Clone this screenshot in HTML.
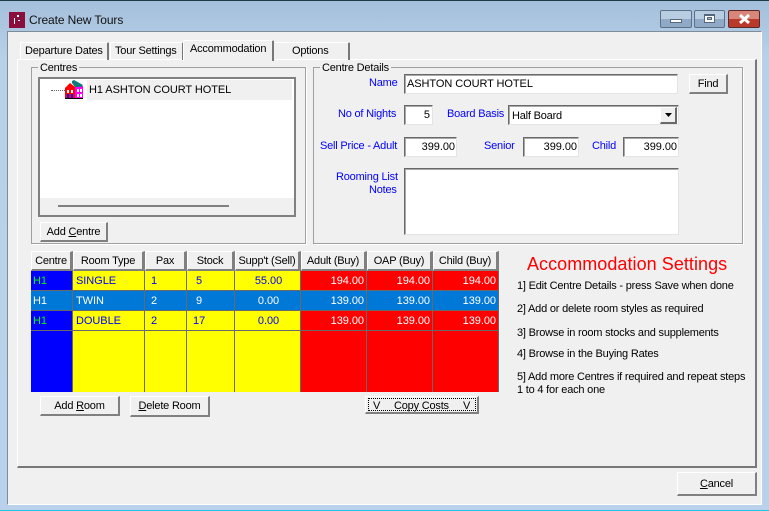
<!DOCTYPE html>
<html><head><meta charset="utf-8"><style>
html,body{margin:0;padding:0;width:769px;height:511px;overflow:hidden}
#w{position:relative;width:769px;height:511px;overflow:hidden;background:linear-gradient(#a4bfdb,#b9d1e8 60px,#b9d1ea);font:11px/16px "Liberation Sans",sans-serif;letter-spacing:-.2px;color:#000}
#w div,#w span{position:absolute;box-sizing:border-box;white-space:nowrap}
.b{color:#0000ff}
.up{letter-spacing:-.07px}
.n{letter-spacing:-.05px}
.in{background:#fff;border:1px solid;border-color:#696969 #e4e4e4 #e4e4e4 #696969;box-shadow:inset 1px 1px 0 #a8a8a8}
.btn{background:#f0f0f0;border:1px solid;border-color:#fff #808080 #808080 #fff;border-width:1px 2px 2px 1px;text-align:center;line-height:18px}
.grp{border:1px solid #a0a0a0;box-shadow:1px 1px 0 #fff}
.h{background:#f0f0f0;border:1px solid;border-color:#fff #808080 #808080 #fff;border-width:1px 3px 2px 1px;text-align:center;line-height:18px;height:20px}
.c{height:19px;line-height:21px;padding:0 2px;letter-spacing:-.05px}
u{text-decoration:underline}
</style></head><body><div id="w">
<div style="left:0;top:0;width:769px;height:1px;background:#1d3b45"></div>
<div style="left:0;top:510px;width:769px;height:1px;background:#20c8e8"></div>
<div style="left:9px;top:12px;width:16px;height:16px;background:#8b0f3d"></div>
<div style="left:17px;top:15px;width:2px;height:2px;background:#fff"></div>
<div style="left:14px;top:18px;width:1px;height:6px;background:#fff"></div>
<div style="left:18px;top:20px;width:2px;height:1px;background:#fff"></div>
<span style="left:29px;top:12px;font-size:12px;letter-spacing:-.1px;color:#111">Create New Tours</span>

<div style="left:660px;top:10px;width:32px;height:18px;border:1px solid #5d7088;border-radius:2px;background:linear-gradient(#b9cde2 50%,#8fa9c6 50%)"></div>
<div style="left:670px;top:19px;width:12px;height:4px;background:#fff;border:1px solid #55677c"></div>
<div style="left:694px;top:10px;width:31px;height:18px;border:1px solid #5d7088;border-radius:2px;background:linear-gradient(#b9cde2 50%,#8fa9c6 50%)"></div>
<div style="left:704px;top:14px;width:11px;height:9px;background:#fff;border:1px solid #55677c;border-top-width:2px"></div>
<div style="left:707px;top:17px;width:5px;height:3px;background:#a4bbd4;border:1px solid #55677c"></div>
<div style="left:728px;top:10px;width:32px;height:18px;border:1px solid #5a2a2a;border-radius:2px;background:linear-gradient(#d8867a 50%,#b93a2a 50%)"></div>
<svg style="position:absolute;left:738px;top:14px" width="13" height="10" viewBox="0 0 13 10"><path d="M2 1L11 9M11 1L2 9" stroke="#fff" stroke-width="3"/></svg>

<div style="left:7px;top:31px;width:755px;height:474px;background:#f0f0f0;border:1px solid;border-color:#7e8c9a #fff #fff #7e8c9a"></div>

<div style="left:17px;top:59px;width:740px;height:409px;border:1px solid;border-color:#fff #787878 #787878 #fff;border-width:1px 2px 2px 1px"></div>

<div style="left:20px;top:42px;width:89px;height:18px;border:1px solid;border-color:#fff #787878 #f0f0f0 #fff;border-width:1px 2px 0 1px;border-radius:2px 2px 0 0"></div>
<span style="left:25px;top:43px">Departure Dates</span>
<div style="left:110px;top:42px;width:74px;height:18px;border:1px solid;border-color:#fff #787878 #f0f0f0 #fff;border-width:1px 2px 0 1px;border-radius:2px 2px 0 0"></div>
<span style="left:115px;top:43px">Tour Settings</span>
<div style="left:183px;top:40px;width:91px;height:21px;background:#f0f0f0;border:1px solid;border-color:#fff #787878 #f0f0f0 #fff;border-width:1px 2px 0 1px;border-radius:2px 2px 0 0"></div>
<span style="left:190px;top:41px">Accommodation</span>
<div style="left:274px;top:42px;width:76px;height:18px;border:1px solid;border-color:#fff #787878 #f0f0f0 #f0f0f0;border-width:1px 2px 0 1px;border-radius:2px 2px 0 0"></div>
<span style="left:292px;top:43px">Options</span>

<div class="grp" style="left:31px;top:67px;width:275px;height:177px"></div>
<span style="left:38px;top:60px;background:#f0f0f0;padding:0 2px;">Centres</span>
<div style="left:38px;top:77px;width:258px;height:140px;background:#fff;border:2px solid #808080"></div>
<div style="left:87px;top:80px;width:205px;height:20px;background:#f0f0f0"></div>
<div style="left:40px;top:198px;width:254px;height:17px;background:#f0f0f0"></div>
<div style="left:58px;top:205px;width:171px;height:2px;background:#808080"></div>
<div style="left:51px;top:90px;width:14px;height:0;border-top:1px dotted #666"></div>
<svg style="position:absolute;left:64px;top:79px" width="20" height="21" viewBox="0 0 20 21"><rect x="1" y="9" width="10" height="11" fill="#f00"/><rect x="11" y="7" width="8" height="13" fill="#f0f"/><path d="M1 9L6 4L11 8V9H1Z" fill="#f00"/><path d="M8 2L10 1L19 6L17 8H11L8 4Z" fill="#0f7c7c"/><rect x="1" y="19" width="18" height="1" fill="#000"/><rect x="3" y="11" width="2" height="3" fill="#fff"/><rect x="7" y="11" width="2" height="3" fill="#fff"/><rect x="3" y="15" width="2" height="4" fill="#00f"/><rect x="7" y="15" width="2" height="4" fill="#00f"/><rect x="13" y="10" width="2" height="3" fill="#fff"/><rect x="16" y="10" width="2" height="3" fill="#fff"/><rect x="13" y="15" width="2" height="3" fill="#fff"/><rect x="16" y="15" width="2" height="3" fill="#fff"/></svg>
<span class="up" style="left:89px;top:82px">H1 ASHTON COURT HOTEL</span>
<div class="btn" style="left:40px;top:222px;width:68px;height:20px">Add <u>C</u>entre</div>

<div class="grp" style="left:313px;top:67px;width:430px;height:177px"></div>
<span style="left:320px;top:60px;background:#f0f0f0;padding:0 2px;">Centre Details</span>
<span class="b" style="left:369px;top:75px">Name</span>
<div class="in" style="left:404px;top:74px;width:274px;height:20px"></div>
<span class="up" style="left:407px;top:76px">ASHTON COURT HOTEL</span>
<div class="btn" style="left:689px;top:74px;width:39px;height:20px">Find</div>
<span class="b" style="left:338px;top:106px">No of Nights</span>
<div class="in n" style="left:404px;top:105px;width:29px;height:20px;text-align:right;padding-right:2px;line-height:18px">5</div>
<span class="b" style="left:447px;top:106px">Board Basis</span>
<div class="in" style="left:508px;top:105px;width:171px;height:20px"></div>
<span style="left:512px;top:108px">Half Board</span>
<div style="left:660px;top:107px;width:17px;height:17px;background:#f0f0f0;border:1px solid;border-color:#fff #696969 #696969 #fff;border-width:1px 2px 2px 1px"></div>
<svg style="position:absolute;left:665px;top:113px" width="8" height="5"><path d="M0 0H7L3.5 4Z" fill="#000"/></svg>
<span class="b" style="left:320px;top:138px">Sell Price - Adult</span>
<div class="in n" style="left:404px;top:137px;width:53px;height:20px;text-align:right;padding-right:1px;line-height:18px">399.00</div>
<span class="b" style="left:484px;top:138px">Senior</span>
<div class="in n" style="left:523px;top:137px;width:56px;height:20px;text-align:right;padding-right:1px;line-height:18px">399.00</div>
<span class="b" style="left:592px;top:138px">Child</span>
<div class="in n" style="left:623px;top:137px;width:56px;height:20px;text-align:right;padding-right:1px;line-height:18px">399.00</div>
<span class="b" style="left:336px;top:169px">Rooming List</span>
<span class="b" style="left:369px;top:182px">Notes</span>
<div class="in" style="left:404px;top:168px;width:275px;height:67px"></div>

<div style="left:31px;top:270px;width:468px;height:122px;background:#696969"></div>
<div class="h" style="left:31px;top:251px;width:42px">Centre</div>
<div class="h" style="left:73px;top:251px;width:72px">Room Type</div>
<div class="h" style="left:145px;top:251px;width:42px">Pax</div>
<div class="h" style="left:187px;top:251px;width:48px">Stock</div>
<div class="h" style="left:235px;top:251px;width:66px">Supp't (Sell)</div>
<div class="h" style="left:301px;top:251px;width:66px">Adult (Buy)</div>
<div class="h" style="left:367px;top:251px;width:66px">OAP (Buy)</div>
<div class="h" style="left:433px;top:251px;width:66px">Child (Buy)</div>

<div class="c" style="left:31px;top:271px;width:41px;background:#00f;color:#0f0">H1</div>
<div class="c b" style="left:73px;top:271px;width:71px;background:#ff0;padding-left:3px">SINGLE</div>
<div class="c b" style="left:145px;top:271px;width:41px;background:#ff0;padding-left:6px">1</div>
<div class="c b" style="left:187px;top:271px;width:47px;background:#ff0;padding-left:9px">5</div>
<div class="c b" style="left:235px;top:271px;width:65px;background:#ff0;text-align:center;padding:0 0 0 2px">55.00</div>
<div class="c" style="left:301px;top:271px;width:65px;background:#f00;color:#fff;text-align:right">194.00</div>
<div class="c" style="left:367px;top:271px;width:65px;background:#f00;color:#fff;text-align:right">194.00</div>
<div class="c" style="left:433px;top:271px;width:65px;background:#f00;color:#fff;text-align:right">194.00</div>

<div class="c" style="left:31px;top:291px;width:41px;background:#0078d7;color:#fff">H1</div>
<div class="c" style="left:73px;top:291px;width:71px;background:#0078d7;color:#fff;padding-left:3px">TWIN</div>
<div class="c" style="left:145px;top:291px;width:41px;background:#0078d7;color:#fff;padding-left:6px">2</div>
<div class="c" style="left:187px;top:291px;width:47px;background:#0078d7;color:#fff;padding-left:9px">9</div>
<div class="c" style="left:235px;top:291px;width:65px;background:#0078d7;color:#fff;text-align:center;padding:0 0 0 2px">0.00</div>
<div class="c" style="left:301px;top:291px;width:65px;background:#0078d7;color:#fff;text-align:right">139.00</div>
<div class="c" style="left:367px;top:291px;width:65px;background:#0078d7;color:#fff;text-align:right">139.00</div>
<div class="c" style="left:433px;top:291px;width:65px;background:#0078d7;color:#fff;text-align:right">139.00</div>

<div class="c" style="left:31px;top:311px;width:41px;background:#00f;color:#0f0">H1</div>
<div class="c b" style="left:73px;top:311px;width:71px;background:#ff0;padding-left:3px">DOUBLE</div>
<div class="c b" style="left:145px;top:311px;width:41px;background:#ff0;padding-left:6px">2</div>
<div class="c b" style="left:187px;top:311px;width:47px;background:#ff0;padding-left:6px">17</div>
<div class="c b" style="left:235px;top:311px;width:65px;background:#ff0;text-align:center;padding:0 0 0 2px">0.00</div>
<div class="c" style="left:301px;top:311px;width:65px;background:#f00;color:#fff;text-align:right">139.00</div>
<div class="c" style="left:367px;top:311px;width:65px;background:#f00;color:#fff;text-align:right">139.00</div>
<div class="c" style="left:433px;top:311px;width:65px;background:#f00;color:#fff;text-align:right">139.00</div>

<div style="left:31px;top:331px;width:41px;height:61px;background:#00f"></div>
<div style="left:73px;top:331px;width:71px;height:61px;background:#ff0"></div>
<div style="left:145px;top:331px;width:41px;height:61px;background:#ff0"></div>
<div style="left:187px;top:331px;width:47px;height:61px;background:#ff0"></div>
<div style="left:235px;top:331px;width:65px;height:61px;background:#ff0"></div>
<div style="left:301px;top:331px;width:65px;height:61px;background:#f00"></div>
<div style="left:367px;top:331px;width:65px;height:61px;background:#f00"></div>
<div style="left:433px;top:331px;width:65px;height:61px;background:#f00"></div>

<div class="btn" style="left:40px;top:396px;width:80px;height:20px">Add <u>R</u>oom</div>
<div class="btn" style="left:130px;top:396px;width:80px;height:21px"><u>D</u>elete Room</div>
<div class="btn" style="left:365px;top:396px;width:114px;height:18px;line-height:13px">
<div style="left:2px;top:1px;width:108px;height:13px;border:1px dotted #000"></div>
<span style="left:7px;top:1px;line-height:16px">V</span><span style="left:28px;top:1px;line-height:16px">Copy Costs</span><span style="left:97px;top:1px;line-height:16px">V</span></div>

<span style="left:527px;top:254px;font-size:18px;line-height:20px;color:#f00;letter-spacing:.05px">Accommodation Settings</span>
<span style="left:517px;top:278px">1] Edit Centre Details - press Save when done</span>
<span style="left:517px;top:301px">2] Add or delete room styles as required</span>
<span style="left:517px;top:325px">3] Browse in room stocks and supplements</span>
<span style="left:517px;top:346px">4] Browse in the Buying Rates</span>
<span style="left:517px;top:369px">5] Add more Centres if required and repeat steps</span>
<span style="left:517px;top:382px">1 to 4 for each one</span>

<div class="btn" style="left:677px;top:472px;width:80px;height:24px;line-height:23px"><u>C</u>ancel</div>
</div></body></html>
